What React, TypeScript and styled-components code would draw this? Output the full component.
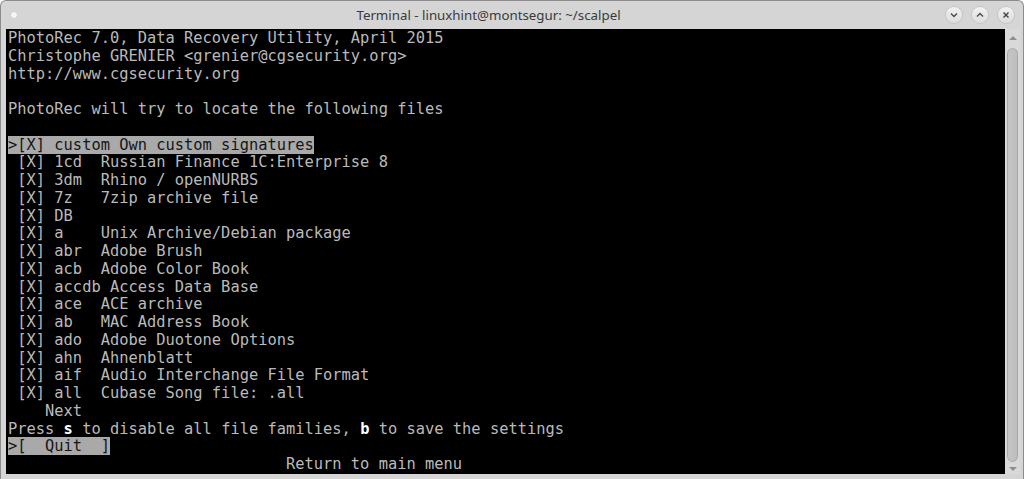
import styled, { createGlobalStyle } from "styled-components";

const GlobalStyle = createGlobalStyle`
  html, body {
    margin: 0;
    padding: 0;
    background: #ffffff;
  }
  #root {
    width: 1024px;
    height: 479px;
  }
`;

const Window = styled.div`
  box-sizing: border-box;
  width: 1024px;
  height: 479px;
  display: flex;
  flex-direction: column;
  background: #d5d5d5;
  border: 1px solid #8c8c8c;
  border-bottom: none;
  border-radius: 6px 6px 0 0;
  overflow: hidden;
`;

const TitleBar = styled.div`
  height: 28px;
  flex: none;
  display: flex;
  align-items: center;
  padding: 0 9px 1px 8px;
  gap: 10px;
  box-sizing: border-box;
`;

const MenuDot = styled.div`
  width: 6px;
  height: 6px;
  border-radius: 50%;
  background: #f6f6f6;
  box-shadow: 0 0 1px #b0b0b0;
  margin-left: 2px;
`;

const Title = styled.div`
  flex: 1;
  text-align: center;
  font-family: "Noto Sans", "Open Sans", sans-serif;
  font-size: 13.3px;
  color: #3a3a3a;
  padding-left: 14px;
`;

const Controls = styled.div`
  display: flex;
  gap: 10px;
`;

const CircleButton = styled.div`
  width: 16px;
  height: 16px;
  border-radius: 50%;
  background: linear-gradient(#f2f2f2, #dcdcdc);
  box-shadow: 0 0 0 1px #c4c4c4;
  display: flex;
  align-items: center;
  justify-content: center;
`;

const Body = styled.div`
  flex: 1;
  display: flex;
  padding: 0 3px 5px 5px;
  min-height: 0;
`;

const Screen = styled.div`
  flex: 1;
  background: #000000;
  padding: 1px 2px 0 2px;
  font-family: "DejaVu Sans Mono", "Liberation Mono", monospace;
  font-size: 15.4px;
  line-height: 17.75px;
  color: #bababa;
  overflow: hidden;
`;

const Line = styled.div`
  white-space: pre;
  height: 17.75px;
`;

const Selected = styled.span`
  background: #a9a9a9;
  color: #161616;
`;

const Key = styled.b`
  color: #ffffff;
  font-weight: bold;
`;

const Scrollbar = styled.div`
  width: 15px;
  flex: none;
  display: flex;
  flex-direction: column;
  align-items: center;
  background: #d9d9d9;
  padding: 4px 0 3px;
  box-sizing: border-box;
`;

const Arrow = styled.div<{ $down?: boolean }>`
  width: 0;
  height: 0;
  border-left: 4px solid transparent;
  border-right: 4px solid transparent;
  ${(p) =>
    p.$down
      ? "border-top: 4px solid #8e8e8e; margin-top: 5px;"
      : "border-bottom: 4px solid #8e8e8e; margin-bottom: 8px; margin-top: 3px;"}
`;

const Thumb = styled.div`
  flex: 1;
  width: 11px;
  border-radius: 6px;
  background: linear-gradient(90deg, #c6c6c6, #bdbdbd);
  border: 1px solid #a8a8a8;
  box-sizing: border-box;
`;

const entries: [string, string][] = [
  ["1cd", "Russian Finance 1C:Enterprise 8"],
  ["3dm", "Rhino / openNURBS"],
  ["7z", "7zip archive file"],
  ["DB", ""],
  ["a", "Unix Archive/Debian package"],
  ["abr", "Adobe Brush"],
  ["acb", "Adobe Color Book"],
  ["accdb", "Access Data Base"],
  ["ace", "ACE archive"],
  ["ab", "MAC Address Book"],
  ["ado", "Adobe Duotone Options"],
  ["ahn", "Ahnenblatt"],
  ["aif", "Audio Interchange File Format"],
  ["all", "Cubase Song file: .all"],
];

function formatEntry(ext: string, desc: string) {
  if (!desc) return ` [X] ${ext}`;
  return ` [X] ${ext.padEnd(4, " ")} ${desc}`;
}

export default function App() {
  return (
    <>
      <GlobalStyle />
      <Window>
        <TitleBar>
          <MenuDot />
          <Title>Terminal - linuxhint@montsegur: ~/scalpel</Title>
          <Controls>
            <CircleButton>
              <svg width="8" height="6" viewBox="0 0 8 6">
                <path d="M1 1.5 L4 4.5 L7 1.5" fill="none" stroke="#4a4a4a" strokeWidth="1.4" />
              </svg>
            </CircleButton>
            <CircleButton>
              <svg width="8" height="6" viewBox="0 0 8 6">
                <path d="M1 4.5 L4 1.5 L7 4.5" fill="none" stroke="#4a4a4a" strokeWidth="1.4" />
              </svg>
            </CircleButton>
            <CircleButton>
              <svg width="8" height="8" viewBox="0 0 8 8">
                <path d="M1.5 1.5 L6.5 6.5 M6.5 1.5 L1.5 6.5" fill="none" stroke="#4a4a4a" strokeWidth="1.5" />
              </svg>
            </CircleButton>
          </Controls>
        </TitleBar>
        <Body>
          <Screen>
            <Line>PhotoRec 7.0, Data Recovery Utility, April 2015</Line>
            <Line>Christophe GRENIER &lt;grenier@cgsecurity.org&gt;</Line>
            <Line>http://www.cgsecurity.org</Line>
            <Line> </Line>
            <Line>PhotoRec will try to locate the following files</Line>
            <Line> </Line>
            <Line>
              <Selected>&gt;[X] custom Own custom signatures</Selected>
            </Line>
            {entries.map(([ext, desc]) => (
              <Line key={ext}>{formatEntry(ext, desc)}</Line>
            ))}
            <Line>{"    Next"}</Line>
            <Line>
              Press <Key>s</Key> to disable all file families, <Key>b</Key> to save the settings
            </Line>
            <Line>
              <Selected>&gt;[  Quit  ]</Selected>
            </Line>
            <Line>{" ".repeat(30)}Return to main menu</Line>
          </Screen>
          <Scrollbar>
            <Arrow />
            <Thumb />
            <Arrow $down />
          </Scrollbar>
        </Body>
      </Window>
    </>
  );
}
